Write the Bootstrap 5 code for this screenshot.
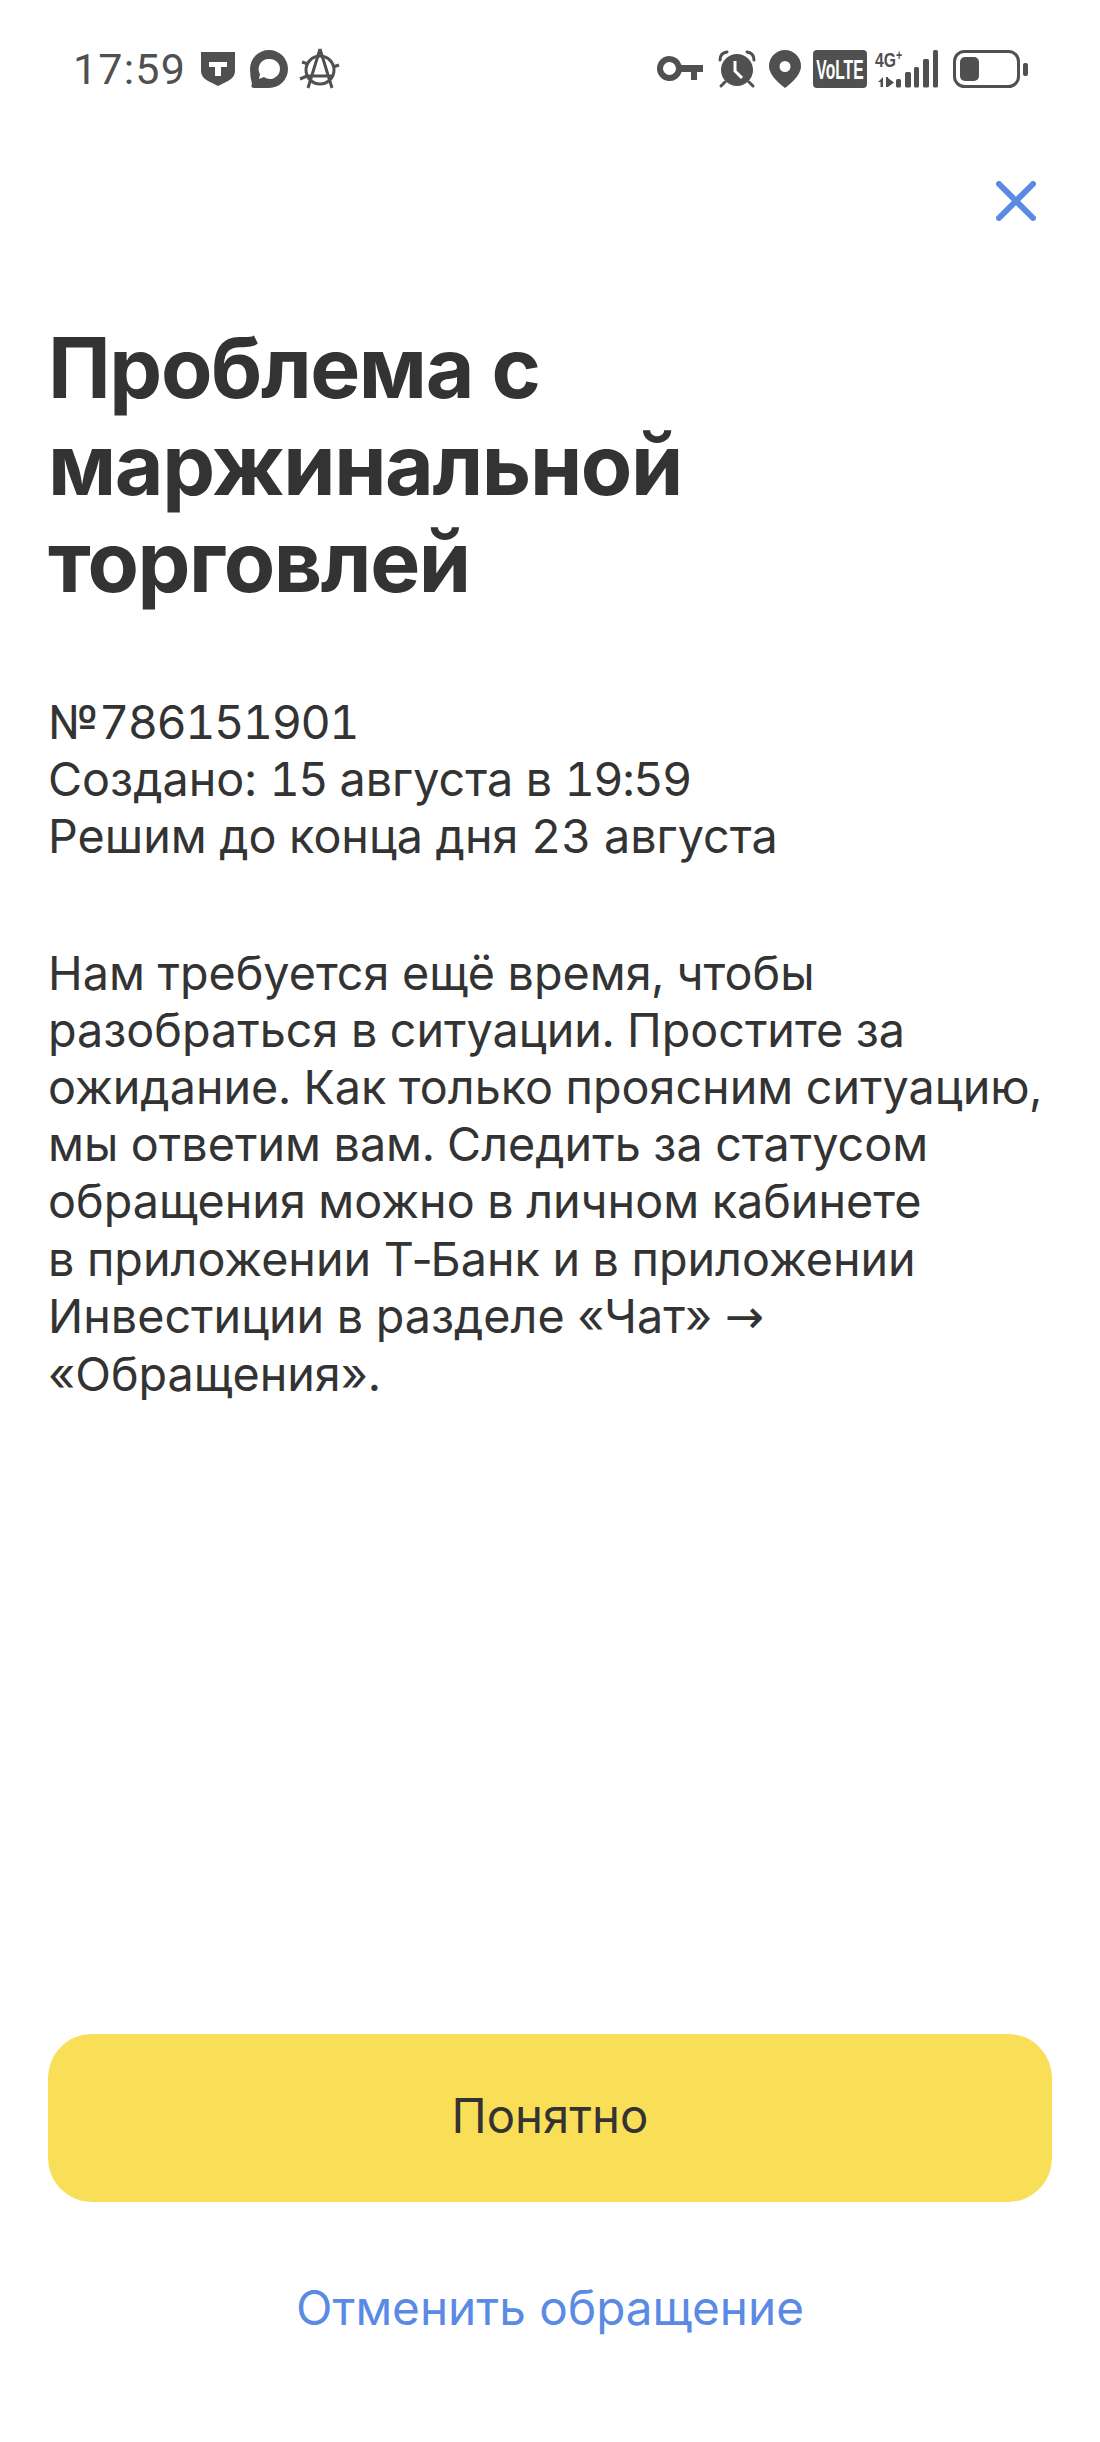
<!DOCTYPE html>
<html lang="ru">
<head>
    <meta charset="UTF-8">
    <meta name="viewport" content="width=device-width, initial-scale=1.0">
    <title>Проблема с маржинальной торговлей</title>
    <link href="https://cdn.jsdelivr.net/npm/bootstrap@5.3.0/dist/css/bootstrap.min.css" rel="stylesheet">
    <style>
        body {
            background-color: #fff;
            color: #333;
            font-family: "Inter", "Liberation Sans", sans-serif;
        }
        .screen {
            height: 2442px;
            overflow: hidden;
        }
        .status-bar {
            height: 40px;
            margin-top: 49px;
            padding: 0 71px 0 73px;
            color: #505050;
        }
        .status-time {
            font-family: "Roboto", sans-serif;
            font-size: 43px;
            font-weight: 400;
            line-height: 40px;
            letter-spacing: 1.200px;
            width: 127px;
        }
        .status-bar svg {
            display: block;
            fill: #505050;
            overflow: visible;
        }
        .status-bar text {
            font-family: "Liberation Sans", sans-serif;
            font-weight: 700;
        }
        .ico-shield { margin-right: 13px; }
        .ico-chat { margin-right: 11px; }
        .ico-key { margin-right: 15px; }
        .ico-alarm { margin-right: 13px; }
        .ico-pin { margin-right: 12px; }
        .ico-volte { margin-right: 8px; }
        .ico-signal { margin-right: 14px; }
        .close-row {
            padding: 92px 64px 0 0;
        }
        .close-btn {
            color: #5b8ae4;
            line-height: 0;
        }
        .content-box {
            padding: 0 48px;
        }
        .issue-title {
            font-size: 84px;
            font-weight: 700;
            line-height: 97px;
            margin: 98px 0 0;
            color: #333;
            letter-spacing: -1.400px;
        }
        .issue-meta, .issue-text {
            font-size: 46.700px;
            line-height: 57.200px;
            font-weight: 400;
            white-space: nowrap;
            margin: 0;
            font-variant-numeric: tabular-nums;
        }
        .issue-meta { margin-top: 84px; }
        .issue-text { margin-top: 79px; }
        .num-part { letter-spacing: -1.500px; }
        .long-arrow { font-family: "DejaVu Sans", sans-serif; }
        .btn-ok {
            display: block;
            width: 100%;
            height: 168px;
            background-color: #f9de57;
            border: none;
            border-radius: 44px;
            color: #333;
            font-size: 47.300px;
            padding-bottom: 10px;
        }
        .btn-ok:hover { background-color: #f9de57; color: #333; }
        .btn-cancel {
            display: block;
            text-align: center;
            color: #5b8ae4;
            font-size: 47.700px;
            line-height: 57px;
            text-decoration: none;
            margin-top: 78px;
        }
        .actions {
            margin-bottom: 105px;
        }
    </style>
</head>
<body>
    <div class="screen d-flex flex-column">
        <div class="status-bar d-flex justify-content-between align-items-center">
            <div class="d-flex align-items-center">
                <span class="status-time">17:59</span>
                <!-- T shield -->
                <svg width="36" height="36" viewBox="0 0 36 36" class="ico-shield">
                    <path d="M1 1H35V20Q35 26 28 30L18 35L8 30Q1 26 1 20Z"/>
                    <path fill="#fff" d="M9 11H27V16H21V25H15V16H9Z"/>
                </svg>
                <!-- chat -->
                <svg width="40" height="40" viewBox="0 0 40 40" class="ico-chat">
                    <path fill-rule="evenodd" d="M20 1A19 19 0 0 1 20 39H5Q1 39 3 35Q1 28 1 20A19 19 0 0 1 20 1ZM20 10A10 10 0 0 0 11 25L10 30L15 28A10 10 0 1 0 20 10Z"/>
                </svg>
                <!-- anarchy -->
                <svg width="40" height="40" viewBox="0 0 40 40">
                    <g stroke="#505050" stroke-width="3" fill="none">
                        <circle cx="20" cy="21" r="14"/>
                        <path d="M20 0L8 39M20 0L32 39M8 27H33"/>
                        <path d="M2 13L8 15M39 16L33 18M0 30L7 27"/>
                    </g>
                </svg>
            </div>
            <div class="d-flex align-items-center">
                <!-- key -->
                <svg width="46" height="26" viewBox="0 0 46 26" class="ico-key">
                    <path fill-rule="evenodd" d="M12.500 0A12.500 12.500 0 0 1 24.500 9H46V16H40V24H34V16H24.500A12.500 12.500 0 1 1 12.500 0ZM12.500 6A6.500 6.500 0 1 0 12.500 19A6.500 6.500 0 0 0 12.500 6Z"/>
                </svg>
                <!-- alarm -->
                <svg width="38" height="38" viewBox="0 0 38 38" class="ico-alarm">
                    <circle cx="19" cy="20" r="16"/>
                    <path d="M2 10Q2 3 9 2M36 10Q36 3 29 2M7 32L3 36M31 32L35 36" stroke="#505050" stroke-width="3" fill="none" stroke-linecap="round"/>
                    <path d="M17 11V21L24 28" stroke="#fff" stroke-width="3" fill="none"/>
                </svg>
                <!-- pin -->
                <svg width="32" height="38" viewBox="0 0 32 38" class="ico-pin">
                    <path fill-rule="evenodd" d="M16 0A16 16 0 0 1 32 16Q32 26 16 38Q0 26 0 16A16 16 0 0 1 16 0ZM16 11A5.500 5.500 0 1 0 16 22A5.500 5.500 0 0 0 16 11Z"/>
                </svg>
                <!-- VoLTE -->
                <svg width="54" height="38" viewBox="0 0 54 38" class="ico-volte">
                    <rect width="54" height="38" rx="4"/>
                    <text transform="translate(27 29) scale(.58 1)" text-anchor="middle" font-size="27" fill="#fff">VoLTE</text>
                </svg>
                <!-- 4G+ and signal -->
                <svg width="64" height="38" viewBox="0 0 64 38" class="ico-signal">
                    <text transform="translate(0 17) scale(.75 1)" font-size="21">4G<tspan font-size="14" dy="-7">+</tspan></text>
                    <path d="M3 32L8 27V37H5.500V32ZM11 37V27H13V28L19 32.500L13 37Z"/>
                    <rect x="21" y="29" width="5" height="8.500" rx="1.500"/>
                    <rect x="30" y="22" width="6" height="15.500" rx="1.500"/>
                    <rect x="39" y="17" width="5" height="20.500" rx="1.500"/>
                    <rect x="48" y="9" width="6" height="28.500" rx="1.500"/>
                    <rect x="58" y="0" width="5" height="37.500" rx="1.500"/>
                </svg>
                <!-- battery -->
                <svg width="76" height="38" viewBox="0 0 76 38">
                    <rect x="1.500" y="1.500" width="64" height="35" rx="10" fill="none" stroke="#505050" stroke-width="3"/>
                    <rect x="7" y="7" width="19" height="24" rx="5"/>
                    <rect x="70" y="13" width="5" height="13" rx="2"/>
                </svg>
            </div>
        </div>

        <div class="close-row d-flex justify-content-end">
            <a class="close-btn" href="#" aria-label="Закрыть">
                <svg width="40" height="40" viewBox="0 0 40 40" fill="none" stroke="currentColor" stroke-width="6" stroke-linecap="round">
                    <path d="M3 3L37 37M37 3L3 37"/>
                </svg>
            </a>
        </div>

        <div class="content-box d-flex flex-column flex-grow-1">
            <h1 class="issue-title">Проблема с<br>маржинальной<br>торговлей</h1>
            <p class="issue-meta">№<span class="num-part">786151901</span><br>Создано: <span class="num-part">15</span> августа в <span class="num-part">19:59</span><br>Решим до конца дня 23 августа</p>
            <p class="issue-text">Нам требуется ещё время, чтобы<br>разобраться в ситуации. Простите за<br>ожидание. Как только проясним ситуацию,<br>мы ответим вам. Следить за статусом<br>обращения можно в личном кабинете<br>в приложении Т‑Банк и в приложении<br>Инвестиции в разделе «Чат» <span class="long-arrow">→</span><br>«Обращения».</p>

            <div class="actions mt-auto">
                <button type="button" class="btn btn-ok">Понятно</button>
                <a class="btn-cancel" href="#">Отменить обращение</a>
            </div>
        </div>
    </div>

    <script src="https://cdn.jsdelivr.net/npm/bootstrap@5.3.0/dist/js/bootstrap.bundle.min.js"></script>
</body>
</html>
